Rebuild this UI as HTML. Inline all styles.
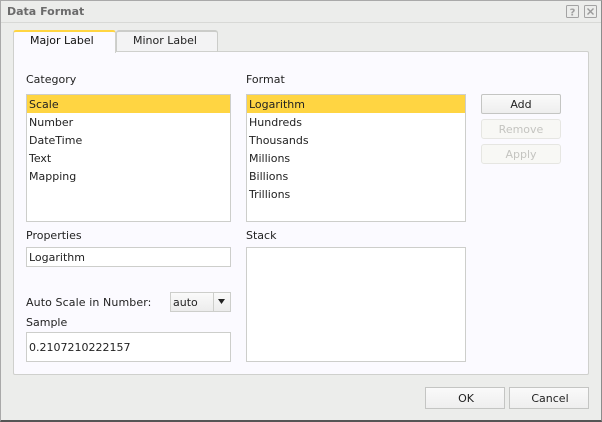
<!DOCTYPE html>
<html>
<head>
<meta charset="utf-8">
<style>
html,body{margin:0;padding:0}
body{width:602px;height:422px;overflow:hidden;background:#ecedeb;position:relative;font:11px/14px "DejaVu Sans",sans-serif;color:#222}
div{position:absolute;box-sizing:border-box;white-space:nowrap}
.t{height:14px}
.box{border:1px solid #cdcecb;background:#fff}
.row{left:2px;height:18px;line-height:20px}
.btn{border:1px solid #c4c5c3;border-radius:2px;text-align:center;background:linear-gradient(#fafafa,#eee);color:#222;width:80px}
.dis{border-color:#e6e6e2;background:#f8f8f5;color:#c4c4c0;border-radius:3px}
</style>
</head>
<body>
<div style="left:0;top:0;width:602px;height:422px;border:1px solid #a9a9a9;border-bottom:2px solid #555;border-right-color:#8c8c8c"></div>
<div style="left:1px;top:22px;width:600px;height:1px;background:#d8d9d6"></div>
<div class="t" style="left:7px;top:5px;font-weight:bold;color:#6b6b6b;font-size:11px">Data Format</div>

<svg style="position:absolute;left:566px;top:5px" width="32" height="13" viewBox="0 0 32 13">
<rect x="0.5" y="0.5" width="12" height="12" rx="1" fill="none" stroke="#a3a3a3"/>
<rect x="18.5" y="0.5" width="12" height="12" rx="1" fill="none" stroke="#a3a3a3"/>
<text x="6.5" y="10.5" font-family="DejaVu Sans" font-size="10" font-weight="bold" fill="#a0a0a0" text-anchor="middle">?</text>
<path d="M21.5 3.5L27.5 9.5M27.5 3.5L21.5 9.5" stroke="#9a9a9a" stroke-width="1.4" fill="none"/>
</svg>

<div style="left:13px;top:51px;width:576px;height:324px;background:#fbfaff;border:1px solid #cfd0cd;border-radius:2px"></div>
<div style="left:116px;top:30px;width:102px;height:22px;background:#f3f3f4;border:1px solid #cbccc9;border-bottom:1px solid #cfd0cd;border-top:2px solid #cbccc9;border-radius:3px 3px 0 0;text-indent:16px;line-height:18px;color:#222">Minor Label</div>
<div style="left:13px;top:30px;width:103px;height:23px;background:#fbfaff;border:1px solid #cfd0cd;border-top:2px solid #ffd542;border-bottom:0;border-radius:3px 3px 0 0;text-indent:16px;line-height:18px;color:#111">Major Label</div>

<div class="t" style="left:26px;top:73px">Category</div>
<div class="box" style="left:26px;top:94px;width:205px;height:128px">
  <div style="left:0;top:0;width:203px;height:18px;background:#ffd542"></div>
  <div class="row" style="top:0">Scale</div>
  <div class="row" style="top:18px">Number</div>
  <div class="row" style="top:36px">DateTime</div>
  <div class="row" style="top:54px">Text</div>
  <div class="row" style="top:72px">Mapping</div>
</div>

<div class="t" style="left:246px;top:73px">Format</div>
<div class="box" style="left:246px;top:94px;width:220px;height:128px">
  <div style="left:0;top:0;width:218px;height:18px;background:#ffd542"></div>
  <div class="row" style="top:0">Logarithm</div>
  <div class="row" style="top:18px">Hundreds</div>
  <div class="row" style="top:36px">Thousands</div>
  <div class="row" style="top:54px">Millions</div>
  <div class="row" style="top:72px">Billions</div>
  <div class="row" style="top:90px">Trillions</div>
</div>

<div class="btn" style="left:481px;top:94px;height:20px;line-height:20px">Add</div>
<div class="btn dis" style="left:481px;top:119px;height:20px;line-height:20px">Remove</div>
<div class="btn dis" style="left:481px;top:144px;height:20px;line-height:20px">Apply</div>

<div class="t" style="left:26px;top:229px">Properties</div>
<div class="box" style="left:26px;top:247px;width:205px;height:20px"><div class="row" style="top:0">Logarithm</div></div>

<div class="t" style="left:246px;top:229px">Stack</div>
<div class="box" style="left:246px;top:247px;width:220px;height:115px"></div>

<div class="t" style="left:26px;top:296px;letter-spacing:.1px">Auto Scale in Number:</div>
<div style="left:170px;top:292px;width:61px;height:20px;border:1px solid #cdcecb;background:linear-gradient(#fafafa,#ececec);line-height:20px;padding-left:2px">auto</div>
<div style="left:213px;top:293px;width:1px;height:18px;background:#cdcecb"></div>
<svg style="position:absolute;left:218px;top:299px" width="7" height="5"><path d="M0 0H7L3.5 5Z" fill="#222"/></svg>

<div class="t" style="left:26px;top:316px">Sample</div>
<div class="box" style="left:26px;top:332px;width:205px;height:30px"><div class="row" style="top:5px">0.2107210222157</div></div>

<div class="btn" style="left:425px;top:387px;height:22px;line-height:21px;border-radius:0;padding-left:2px">OK</div>
<div class="btn" style="left:509px;top:387px;height:22px;line-height:21px;border-radius:0;padding-left:2px">Cancel</div>
</body>
</html>
